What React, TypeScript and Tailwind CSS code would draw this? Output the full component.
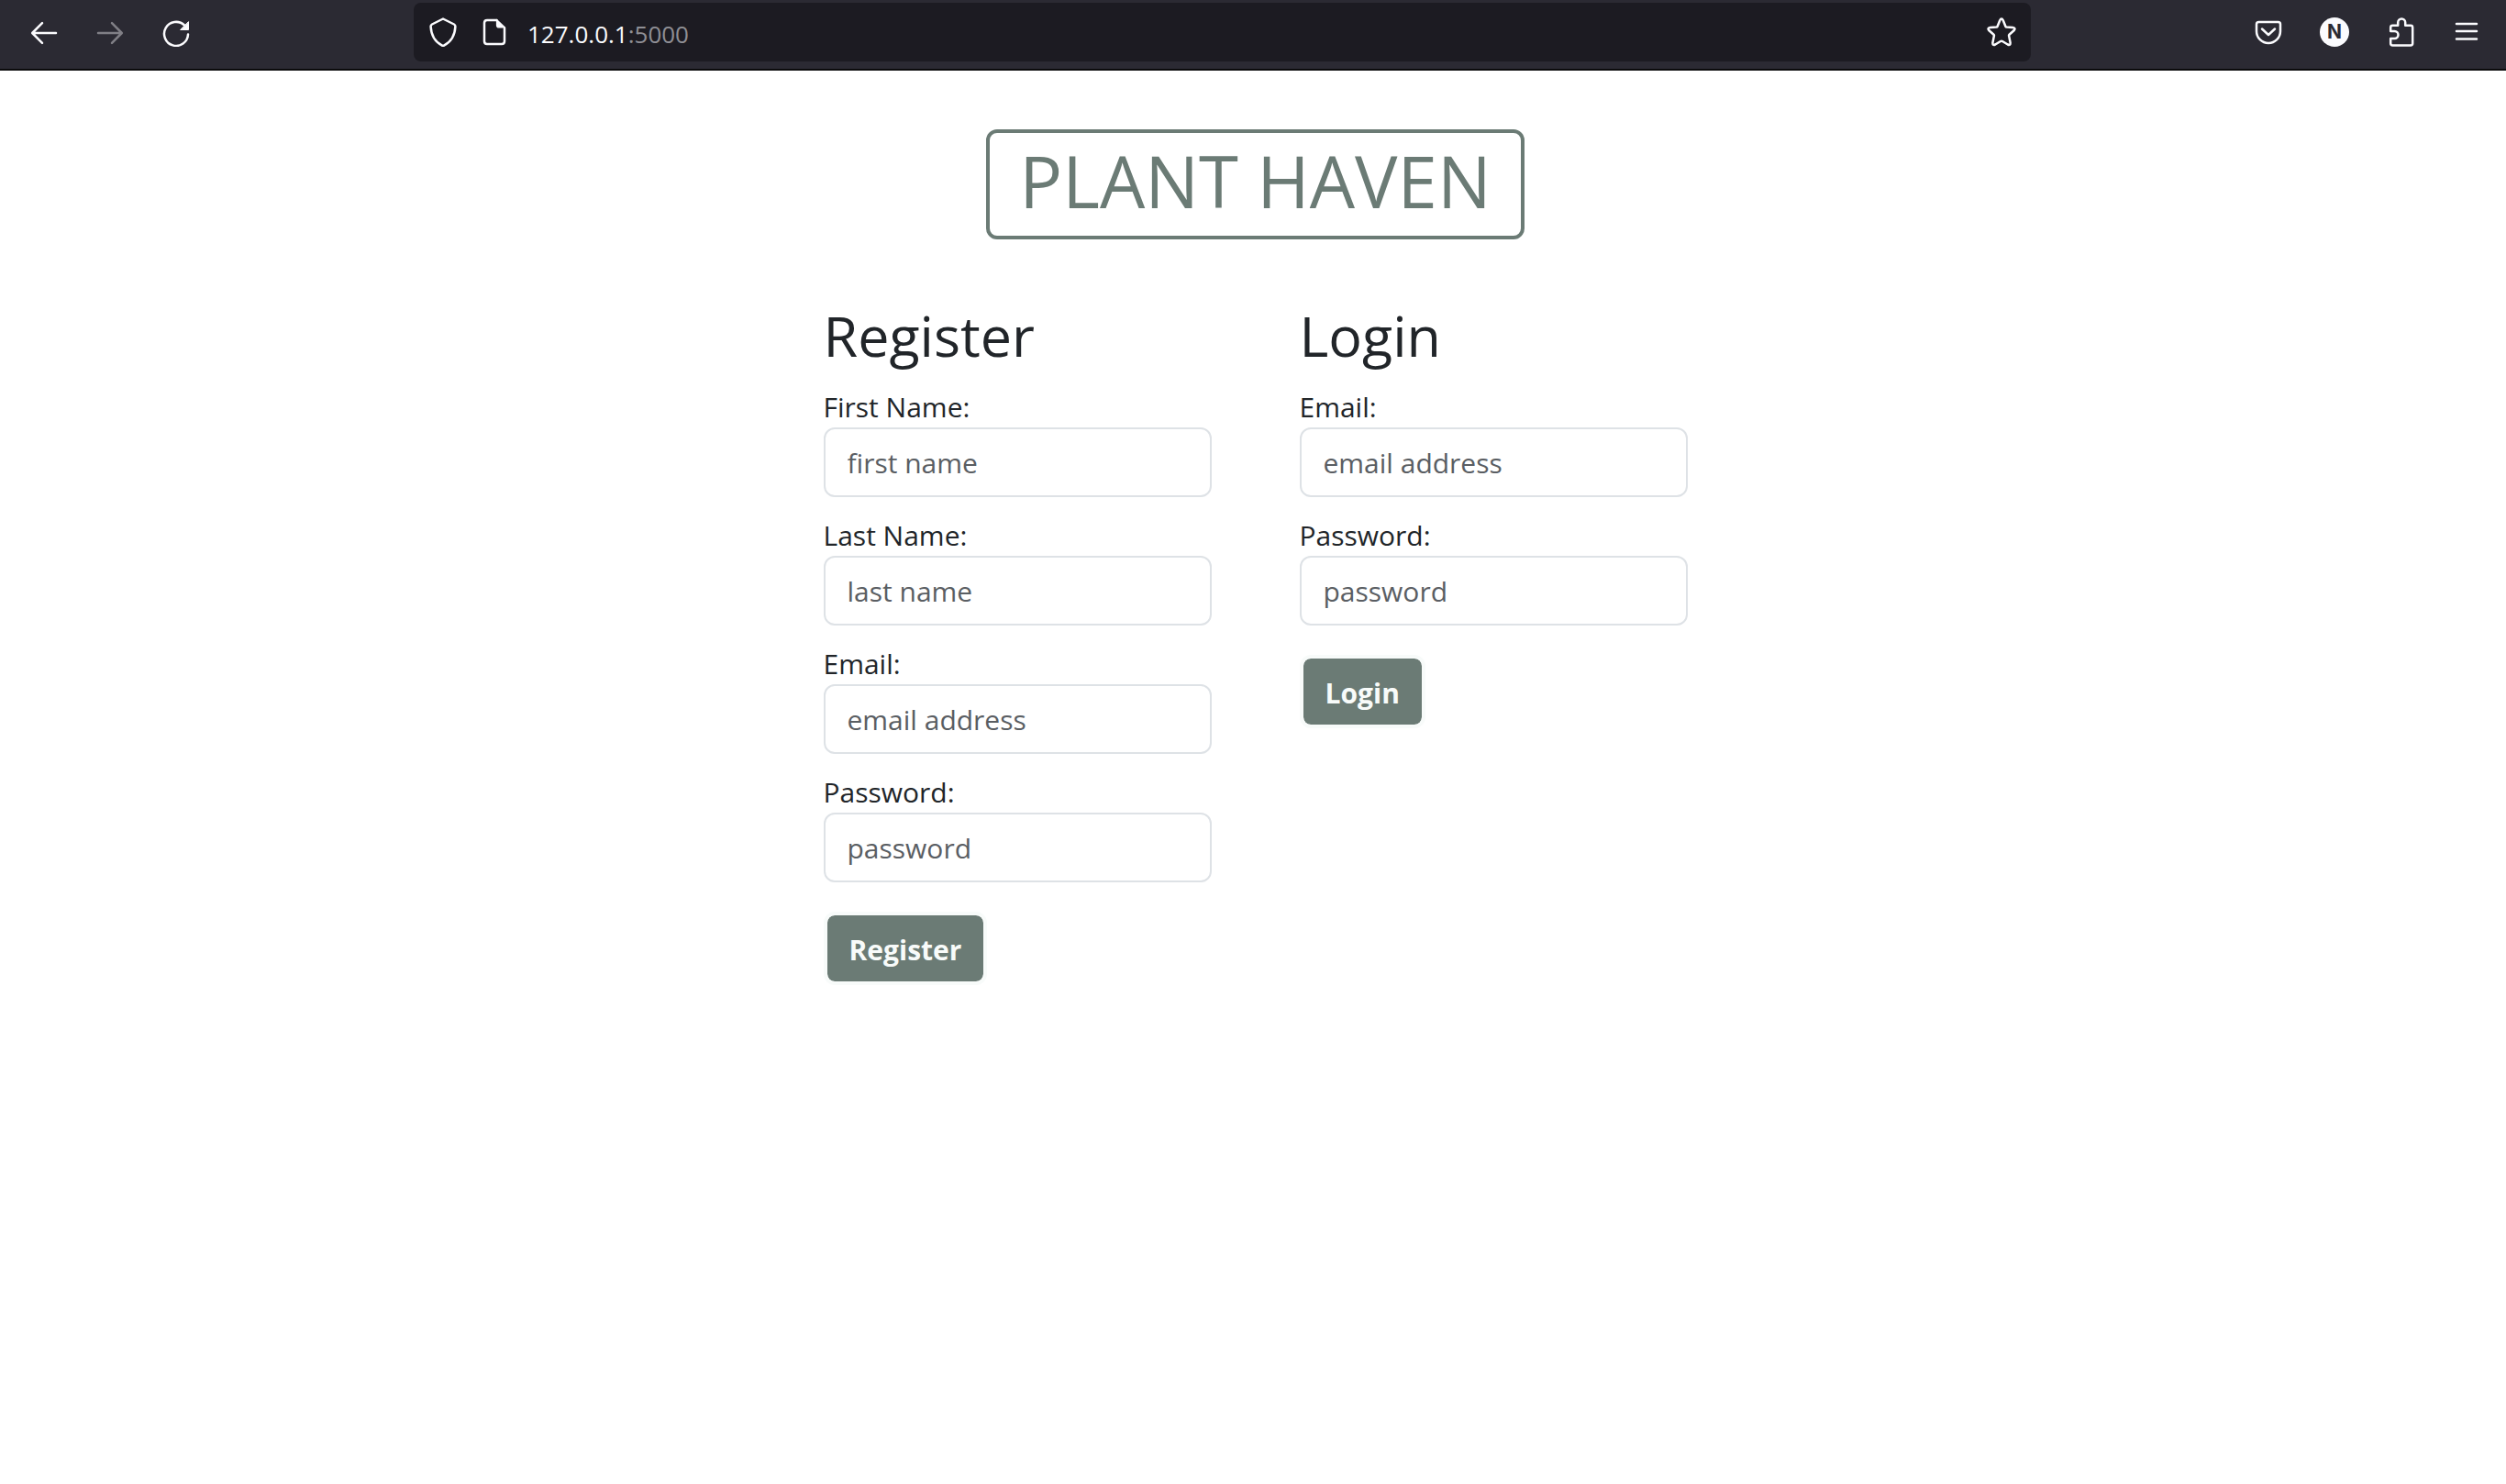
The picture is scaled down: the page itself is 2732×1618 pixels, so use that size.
import React, { useId } from "react";

function Icon({ children, className = "" }: { children: React.ReactNode; className?: string }) {
  return (
    <svg
      viewBox="0 0 32 32"
      className={`size-8 shrink-0 ${className}`}
      fill="none"
      stroke="currentColor"
      strokeWidth={2.5}
      strokeLinecap="round"
      strokeLinejoin="round"
      aria-hidden="true"
    >
      {children}
    </svg>
  );
}

function IconButton({ label, children, disabled }: { label: string; children: React.ReactNode; disabled?: boolean }) {
  return (
    <button type="button" aria-label={label} disabled={disabled} className="shrink-0 disabled:text-[#807f86]">
      <Icon>{children}</Icon>
    </button>
  );
}

function BrowserBar() {
  return (
    <header className="flex items-center border-b-2 border-[#0c0c0d] bg-[#2b2a33] pt-[3px] pr-[27px] pb-2 pl-8 text-[#fbfbfe]">
      <nav className="flex gap-10" aria-label="History">
        <IconButton label="Back">
          <path d="M29 17H3.500M14 6.200 3.200 17 14 27.800" />
        </IconButton>
        <IconButton label="Forward" disabled>
          <path d="M3 17h25.500M18 6.200 28.800 17 18 27.800" />
        </IconButton>
        <IconButton label="Reload">
          <path d="M29 18.500A13 13 0 1 1 25 8.500" />
          <path d="M29.500 5v8.500h-8.500z" fill="currentColor" strokeWidth={1} />
        </IconButton>
      </nav>

      <div className="mx-[243px] flex h-16 grow items-center rounded-lg bg-[#1c1b22] px-4">
        <div className="flex gap-6">
          <IconButton label="Tracking protection">
            <path d="M16 1.500 28 7.500q1.500.8 1.400 2.500C28.900 20 25 26.500 17 30.600q-1 .5-2 0C7 26.500 3.100 20 2.600 10q-.1-1.700 1.400-2.500z" />
          </IconButton>
          <IconButton label="Site information">
            <path d="M18.500 3H8Q5 3 5 6v20q0 3 3 3h16q3 0 3-3V11.500" />
            <path d="M18.500 2.500v6q0 2.500 2.500 2.500h6.500z" fill="currentColor" strokeWidth={1.200} />
          </IconButton>
        </div>
        <p className="ml-5 grow pt-1 font-['Open_Sans',sans-serif] text-[26px] leading-9 text-[#8f8f95]">
          <span className="text-[#fbfbfe]">127.0.0.1</span>:5000
        </p>
        <IconButton label="Bookmark this page">
          <path d="M14.200 3.300q1.800-3.600 3.600 0l2.600 6.400q.3.800 1.200.9l6.800.5q3.500.5 1.100 3.200l-5 4.400q-.6.600-.4 1.400l1.500 7.300q.3 3.500-2.800 2.100l-5.800-3.500q-1-.6-2 0l-5.800 3.500q-3.100 1.400-2.800-2.100l1.500-7.300q.2-.8-.4-1.400l-5-4.400q-2.400-2.700 1.100-3.200l6.800-.5q.9-.1 1.200-.9z" />
        </IconButton>
      </div>

      <div className="flex gap-10">
        <IconButton label="Save to Pocket">
          <path d="M5.500 5h21Q29 5 29 7.500V15a13 13 0 0 1-26 0V7.500Q3 5 5.500 5z" />
          <path d="m9 12.500 7 6.500 7-6.500" />
        </IconButton>
        <button
          type="button"
          aria-label="Account"
          className="flex size-8 items-center justify-center rounded-full bg-[#fbfbfe] font-['Inter',sans-serif] text-[21px] leading-8 font-bold text-[#2b2a33]"
        >
          N
        </button>
        <IconButton label="Extensions">
          <path d="M5.200 15V11q0-2.200 2.200-2.200h5.800V5.500a4 4 0 0 1 8 0v3.300h5.800q2.200 0 2.200 2.200v17.300q0 2.200-2.200 2.200H7.400q-2.200 0-2.200-2.200V23h4.300a4 4 0 0 0 0-8z" />
        </IconButton>
        <IconButton label="Menu">
          <path d="M5 7h22M5 15h22M5 23.500h22" />
        </IconButton>
      </div>
    </header>
  );
}

function Field({ label, placeholder, type = "text" }: { label: string; placeholder: string; type?: string }) {
  const id = useId();
  return (
    <div className="mb-4 flex flex-col">
      <label htmlFor={id} className="pt-1 leading-[44px]">
        {label}
      </label>
      <input
        id={id}
        type={type}
        placeholder={placeholder}
        className="h-[76px] w-full rounded-xl border-2 border-[#dee2e6] bg-white px-6 text-[#212529] placeholder:text-[#5a5e63]"
      />
    </div>
  );
}

function FormPanel({ title, children }: { title: string; children: React.ReactNode }) {
  return (
    <form className="w-[423px]" onSubmit={(event) => event.preventDefault()}>
      <h2 className="mb-[14px] text-[61px] leading-[76px]">{title}</h2>
      {children}
      <button
        type="submit"
        className="mt-4 rounded-xl border-4 border-[#f8fbfa] bg-[#6b7b75] bg-clip-padding px-6 pt-[14px] pb-[10px] leading-[48px] font-bold text-[#f8fbfa]"
      >
        {title}
      </button>
    </form>
  );
}

export default function App() {
  return (
    <div className="min-h-screen bg-white">
      <BrowserBar />
      <main className="flex flex-col items-center pt-16 pl-[5px] font-['Open_Sans',sans-serif] text-[30px] text-[#212529]">
        <h1 className="rounded-xl border-4 border-[#6b7b75] px-8 pt-1 pb-3 text-[78px] leading-[96px] text-[#6b7b75]">
          PLANT HAVEN
        </h1>
        <div className="mt-[67px] flex items-start gap-24">
          <FormPanel title="Register">
            <Field label="First Name:" placeholder="first name" />
            <Field label="Last Name:" placeholder="last name" />
            <Field label="Email:" placeholder="email address" type="email" />
            <Field label="Password:" placeholder="password" type="password" />
          </FormPanel>
          <FormPanel title="Login">
            <Field label="Email:" placeholder="email address" type="email" />
            <Field label="Password:" placeholder="password" type="password" />
          </FormPanel>
        </div>
      </main>
    </div>
  );
}
